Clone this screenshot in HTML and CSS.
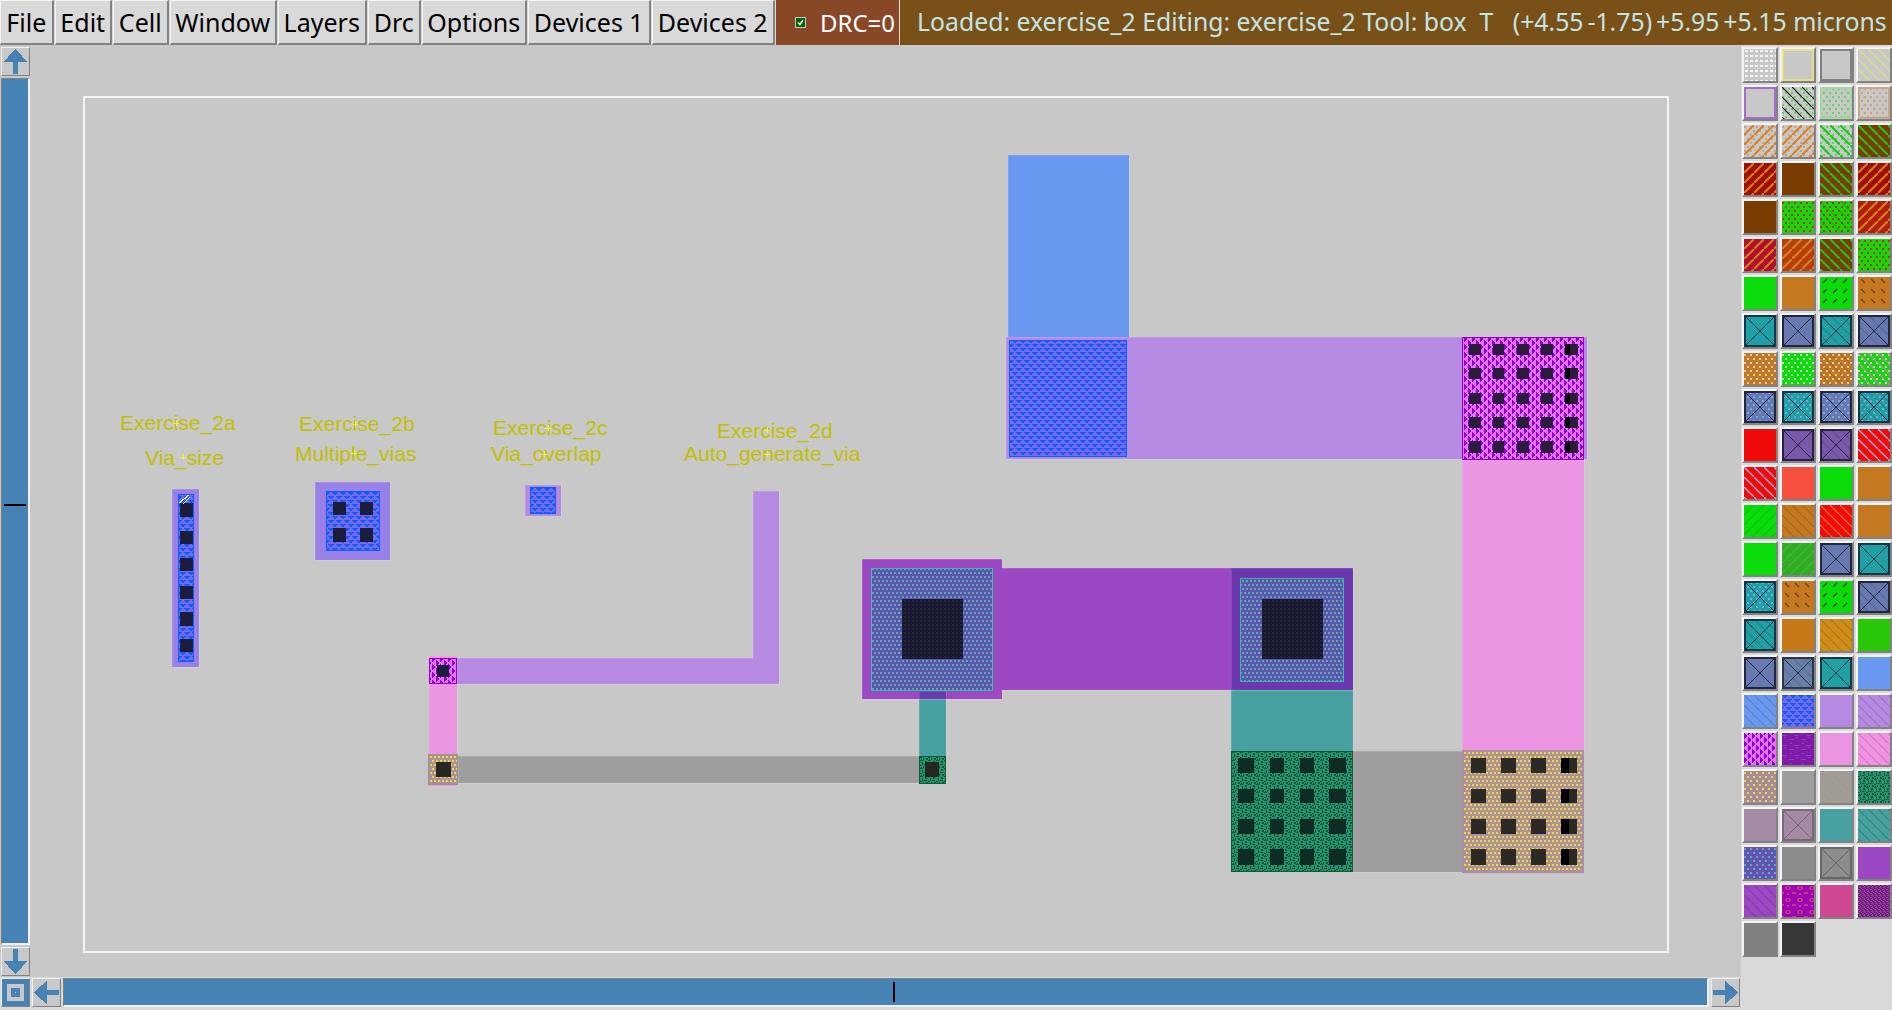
FILE: index.html
```html
<!DOCTYPE html>
<html lang="en">
<head>
<meta charset="utf-8">
<title>XSchem layout</title>
<link rel="stylesheet" href="styles.css">
</head>
<body>
<svg class="defs" aria-hidden="true">
<defs>
<pattern id="fish" width="8" height="8" patternUnits="userSpaceOnUse"><rect width="8" height="8" fill="#7a68e8"/><path fill="#0860ff" d="M0 0h6v1H0zM1 1h4v1H1zM2 2h2v1H2zM4 4h4v1H4zM0 4h2v1H0zM5 5h3v1H5zM0 5h1v1H0zM6 6h2v1H6z"/></pattern>
<pattern id="mag" width="8" height="8" patternUnits="userSpaceOnUse"><rect width="8" height="8" fill="#e274f0"/><path fill="#9000d0" d="M0 0h1v6H0zM1 1h1v4H1zM2 2h1v2H2zM4 4h1v4H4zM4 0h1v2H4zM5 5h1v3H5zM5 0h1v1H5zM6 6h1v2H6z"/></pattern>
<pattern id="tang" width="8" height="8" patternUnits="userSpaceOnUse"><rect width="8" height="8" fill="#2c9070"/><path fill="#0c5c34" d="M0 0h3v1H0zM5 1h2v2H5zM2 2h1v3H2zM0 5h2v1H0zM4 4h3v1H4zM6 6h2v2H6zM3 6h1v2H3zM1 7h1v1H1z"/></pattern>
<pattern id="ring" width="12" height="12" patternUnits="userSpaceOnUse"><rect width="12" height="12" fill="#9c08b0"/><path fill="#d03090" d="M4 1h4v1H4zM3 2h2v2H3zM7 2h2v2H7zM4 4h4v1H4zM0 7h2v2H0zM10 7h2v2H10zM5 8h2v2H5z"/></pattern>
<pattern id="dense" width="4" height="4" patternUnits="userSpaceOnUse"><rect width="4" height="4" fill="#6c1c98"/><path fill="#a04878" d="M0 0h2v1H0zM2 1h1v1H2zM1 2h2v1H1zM3 3h1v1H3z"/></pattern>
<pattern id="stripe" width="12" height="10" patternUnits="userSpaceOnUse"><rect width="12" height="10" fill="#8418a8"/><path fill="#6c4cc0" d="M0 2h5v1H0zM7 6h5v1H7zM2 4h2v1H2zM8 0h2v1H8z"/></pattern>
<pattern id="dp" width="4" height="8" patternUnits="userSpaceOnUse"><rect width="4" height="8" fill="#6a4eb4"/><path fill="#36bca0" d="M0 0h2v2H0zM2 4h2v2H2z"/></pattern>
<pattern id="dy" width="4" height="8" patternUnits="userSpaceOnUse"><rect width="4" height="8" fill="#ab8fa8"/><path fill="#f0e010" d="M0 0h2v2H0zM2 4h2v2H2z"/></pattern>
<pattern id="spk" width="4" height="4" patternUnits="userSpaceOnUse"><path fill="#fff" fill-opacity=".06" d="M0 0h2v2H0z"/></pattern>

<pattern id="d-w" width="5" height="5" patternUnits="userSpaceOnUse"><path fill="#f4f4f4" d="M1 1h3v2H1z"/></pattern>
<pattern id="d-g" width="6" height="8" patternUnits="userSpaceOnUse"><path fill="#58dc58" d="M0 1h2v2H0zM3 5h2v2H3z"/></pattern>
<pattern id="d-t" width="6" height="8" patternUnits="userSpaceOnUse"><path fill="#cca47c" d="M0 1h2v2H0zM3 5h2v2H3z"/></pattern>
<pattern id="d-r" width="6" height="8" patternUnits="userSpaceOnUse"><path fill="#f01818" d="M0 1h2v2H0zM3 5h2v2H3z"/></pattern>
<pattern id="d-p" width="6" height="8" patternUnits="userSpaceOnUse"><path fill="#d0d0c8" d="M0 1h2v2H0zM3 5h2v2H3z"/></pattern>
<pattern id="d-b" width="6" height="8" patternUnits="userSpaceOnUse"><path fill="#70a8e8" d="M0 1h2v2H0zM3 5h2v2H3z"/></pattern>
<pattern id="d-y" width="6" height="8" patternUnits="userSpaceOnUse"><path fill="#f0e010" d="M0 1h2v2H0zM3 5h2v2H3z"/></pattern>
<pattern id="d-c" width="6" height="8" patternUnits="userSpaceOnUse"><path fill="#34c0a4" d="M0 1h2v2H0zM3 5h2v2H3z"/></pattern>

<pattern id="h-k" width="10" height="10" patternUnits="userSpaceOnUse"><path stroke="#101010" stroke-width="1.2" d="M-2 -2L12 12"/></pattern>
<pattern id="h-y" width="10" height="10" patternUnits="userSpaceOnUse"><path stroke="#e4e070" stroke-width="1.2" d="M-2 -2L12 12"/></pattern>
<pattern id="h-g" width="10" height="10" patternUnits="userSpaceOnUse"><path stroke="#18c818" stroke-width="2" d="M-2 -2L12 12"/></pattern>
<pattern id="h-w" width="10" height="10" patternUnits="userSpaceOnUse"><path stroke="#b8b8e0" stroke-width="1.3" d="M-2 -2L12 12"/></pattern>
<pattern id="h-o" width="10" height="10" patternUnits="userSpaceOnUse"><path stroke="#e88020" stroke-width="1.2" d="M-2 -2L12 12"/></pattern>
<pattern id="h-d" width="10" height="10" patternUnits="userSpaceOnUse"><path stroke="#000" stroke-opacity=".15" stroke-width="1.2" d="M-2 -2L12 12"/></pattern>
<pattern id="h-t" width="10" height="10" patternUnits="userSpaceOnUse"><path stroke="#b89468" stroke-width="1.2" d="M-2 -2L12 12"/></pattern>
<pattern id="h-p" width="10" height="10" patternUnits="userSpaceOnUse"><path stroke="#f068c0" stroke-width="1.2" d="M-2 -2L12 12"/></pattern>
<pattern id="h-c" width="10" height="10" patternUnits="userSpaceOnUse"><path stroke="#2c8868" stroke-width="1.2" d="M-2 -2L12 12"/></pattern>
<pattern id="f-o" width="10" height="10" patternUnits="userSpaceOnUse"><path stroke="#d88028" stroke-width="2" d="M12 -2L-2 12"/></pattern>
<pattern id="f-d" width="10" height="10" patternUnits="userSpaceOnUse"><path stroke="#000" stroke-opacity=".12" stroke-width="1.2" d="M12 -2L-2 12"/></pattern>
<pattern id="f-g" width="10" height="10" patternUnits="userSpaceOnUse"><path stroke="#20d020" stroke-width="1.2" d="M12 -2L-2 12"/></pattern>
<pattern id="s-f" width="10" height="10" patternUnits="userSpaceOnUse"><path stroke="#403818" stroke-width="1.2" d="M7 2L3 6"/></pattern>
<pattern id="s-b" width="10" height="10" patternUnits="userSpaceOnUse"><path stroke="#704010" stroke-width="1.2" d="M3 2L7 6"/></pattern>
<path id="box" d="M1 1H31V31H1z" fill="none" stroke-width="2"/>
<path id="x" d="M1 1H31V31H1zM1 1L31 31M31 1L1 31" fill="none" stroke-width="1.2"/>
</defs>
</svg>

<header class="topbar">
  <nav class="menus">
    <div class="menu">File</div>
    <div class="menu">Edit</div>
    <div class="menu">Cell</div>
    <div class="menu">Window</div>
    <div class="menu">Layers</div>
    <div class="menu">Drc</div>
    <div class="menu">Options</div>
    <div class="menu">Devices 1</div>
    <div class="menu">Devices 2</div>
  </nav>
  <div class="drc"><span class="check"><svg viewBox="0 0 11 11"><path d="M2.5 5.5L4.8 8L8.5 2.8" fill="none" stroke="#fff" stroke-width="1.8"/></svg></span>DRC=0</div>
  <div class="status">Loaded: exercise_2 Editing: exercise_2 Tool: box  T   <span class="coords">(+4.55 -1.75) +5.95 +5.15</span> microns</div>
</header>

<div class="work">
  <div class="editor">
    <div class="editor-main">
      <div class="vscroll">
        <div class="sbtn"><svg viewBox="0 0 28 28"><path class="arrow" d="M14 1L27 15H17V27H11V15H1z"/></svg></div>
        <div class="vbar"><span class="vtick"></span></div>
        <div class="sbtn"><svg viewBox="0 0 28 28"><path class="arrow" d="M14 27L1 13H11V1H17V13H27z"/></svg></div>
      </div>
      <div class="canvas">
        <svg class="layout" viewBox="30 45 1711 932">
          <rect class="frame" x="84" y="97" width="1584" height="855"/>

          <g class="edge">
            <rect fill="#9880e8" x="172" y="489" width="27" height="178"/>
            <rect fill="#9880e8" x="315" y="482" width="75" height="78"/>
            <rect fill="#b48ae0" x="525" y="485" width="36" height="31"/>
          </g>
          <rect fill="url(#fish)" stroke="#0860ff" x="178.5" y="494.5" width="15" height="167"/>
          <rect fill="url(#fish)" stroke="#0860ff" x="326.5" y="491.5" width="53" height="59"/>
          <rect fill="url(#fish)" stroke="#0860ff" x="530.5" y="487.5" width="25" height="26"/>
          <path class="contact" d="M180 503h13v14h-13zM180 531h13v13h-13zM180 558h13v13h-13zM180 586h13v13h-13zM180 612h13v14h-13zM180 639h13v13h-13zM333 502h13v13h-13zM360 502h13v13h-13zM333 528h13v14h-13zM360 528h13v14h-13z"/>
          <path d="M179 503L189 495M183 504L190 497" stroke="#e8f0ff" stroke-width="1.2" fill="none"/>

          <g class="edge">
            <path fill="#ea94e2" d="M429 656h28v130h-28z"/>
            <path fill="#b68ae2" d="M753 491h26v193H457v-26h296z"/>
            <rect fill="#9e9e9e" x="458" y="756" width="461" height="27"/>
            <rect fill="#48a0a0" x="919" y="690" width="27" height="66"/>
          </g>
          <rect fill="url(#mag)" stroke="#9000d0" x="429.5" y="658.5" width="27" height="25"/>
          <rect fill="#a09098" x="428" y="754" width="30" height="31"/>
          <rect fill="url(#dy)" x="430" y="756" width="27" height="27"/>
          <rect fill="url(#tang)" stroke="#0c5c34" x="919.5" y="756.5" width="26" height="27"/>
          <path class="contact" d="M437 665h12v12h-12z"/>
          <path class="contact-dk" d="M436 762h15v15h-15zM925 762h14v15h-14z"/>

          <g class="edge">
            <rect fill="#6898f0" x="1008" y="155" width="121" height="182"/>
            <rect fill="#b68ae2" x="1006" y="337" width="581" height="122"/>
            <rect fill="#ea94e2" x="1462" y="460" width="122" height="291"/>
            <rect fill="#48a0a0" x="1231" y="690" width="122" height="61"/>
            <rect fill="#9e9e9e" x="1353" y="751" width="110" height="121"/>
            <path fill="#9c48c4" d="M862 559h140v9h231v122H1002v9H862z"/>
            <rect fill="#6c38b0" x="1231" y="568" width="122" height="122"/>
            <rect fill="#6c38b0" x="919" y="691" width="27" height="8"/>
          </g>
          <rect fill="url(#fish)" stroke="#0860ff" x="1009.5" y="340.5" width="117" height="116"/>
          <rect fill="url(#mag)" stroke="#9000d0" x="1462.5" y="337.5" width="121" height="122"/>
          <rect fill="url(#dp)" stroke="#36bca0" x="871.5" y="568.5" width="121" height="122"/>
          <rect fill="url(#dp)" stroke="#36bca0" x="1240.5" y="578.5" width="103" height="103"/>
          <rect fill="url(#tang)" stroke="#0c5c34" x="1231.5" y="751.5" width="121" height="120"/>
          <rect fill="#ab8fa8" x="1462" y="750" width="122" height="123"/>
          <rect fill="url(#dy)" x="1464" y="752" width="118" height="119"/>
          <path class="contact-big" d="M902 599h61v60h-61zM1262 599h61v60h-61z"/>
          <rect fill="url(#spk)" x="902" y="599" width="61" height="60"/>
          <rect fill="url(#spk)" x="1262" y="599" width="61" height="60"/>
          <path class="contact-mag" d="M1469 344h12v11h-12zM1493 344h11v11h-11zM1517 344h12v11h-12zM1541 344h12v11h-12zM1565 344h13v11h-13zM1469 368h12v11h-12zM1493 368h11v11h-11zM1517 368h12v11h-12zM1541 368h12v11h-12zM1565 368h13v11h-13zM1469 393h12v11h-12zM1493 393h11v11h-11zM1517 393h12v11h-12zM1541 393h12v11h-12zM1565 393h13v11h-13zM1469 417h12v11h-12zM1493 417h11v11h-11zM1517 417h12v11h-12zM1541 417h12v11h-12zM1565 417h13v11h-13zM1469 441h12v12h-12zM1493 441h11v12h-11zM1517 441h12v12h-12zM1541 441h12v12h-12zM1565 441h13v12h-13z"/>
          <path fill="#080408" d="M1565 344h5v11h-5zM1565 368h5v11h-5zM1565 393h5v11h-5zM1565 417h5v11h-5zM1565 441h5v12h-5z"/>
          <path class="contact-grn" d="M1238 758h16v15h-16zM1270 758h14v15h-14zM1300 758h14v15h-14zM1329 758h17v15h-17zM1238 789h16v14h-16zM1270 789h14v14h-14zM1300 789h14v14h-14zM1329 789h17v14h-17zM1238 819h16v15h-16zM1270 819h14v15h-14zM1300 819h14v15h-14zM1329 819h17v15h-17zM1238 849h16v16h-16zM1270 849h14v16h-14zM1300 849h14v16h-14zM1329 849h17v16h-17z"/>
          <path class="contact-tan" d="M1471 758h15v15h-15zM1501 758h15v15h-15zM1531 758h15v15h-15zM1561 758h16v15h-16zM1471 789h15v14h-15zM1501 789h15v14h-15zM1531 789h15v14h-15zM1561 789h16v14h-16zM1471 819h15v15h-15zM1501 819h15v15h-15zM1531 819h15v15h-15zM1561 819h16v15h-16zM1471 849h15v16h-15zM1501 849h15v16h-15zM1531 849h15v16h-15zM1561 849h16v16h-16z"/>
          <path fill="#000" d="M1561 758h8v15h-8zM1561 789h8v14h-8zM1561 819h8v15h-8zM1561 849h8v16h-8z"/>

          <text class="lbl" x="120" y="430">Exercise_2a</text>
          <text class="lbl" x="145" y="465">Via_size</text>
          <text class="lbl" x="299" y="431">Exercise_2b</text>
          <text class="lbl" x="295" y="461">Multiple_vias</text>
          <text class="lbl" x="493" y="435">Exercise_2c</text>
          <text class="lbl" x="491" y="461">Via_overlap</text>
          <text class="lbl" x="717" y="438">Exercise_2d</text>
          <text class="lbl" x="684" y="461">Auto_generate_via</text>
          <path class="mark" d="M173 423h6M176 420v6M180 457h6M183 454v6M352 424h6M355 421v6M351 453h6M354 450v6M545 428h6M548 425v6M541 454h6M544 451v6M764 430h6M767 427v6M764 454h6M767 451v6"/>
        </svg>
      </div>
    </div>
    <div class="hscroll">
      <div class="sbtn sbtn-solid"><svg viewBox="0 0 28 28"><path class="ring" fill-rule="evenodd" d="M5 5h18v18H5zM9 9v10h10V9z"/><path class="ring" d="M13 13h2v2h-2z"/></svg></div>
      <div class="sbtn"><svg viewBox="0 0 28 28"><path class="arrow" d="M1 14L15 1V11H27V17H15V27z"/></svg></div>
      <div class="hbar"><span class="htick"></span></div>
      <div class="sbtn"><svg viewBox="0 0 28 28"><path class="arrow" d="M27 14L13 1V11H1V17H13V27z"/></svg></div>
    </div>
  </div>

  <aside class="palette">
    <div class="cell"><svg class="sw"><rect class="c-base"/><rect fill="url(#d-w)"/></svg></div>
    <div class="cell"><svg class="sw"><rect class="c-base"/><use href="#box" stroke="#e4e084"/></svg></div>
    <div class="cell"><svg class="sw"><rect class="c-base"/><use href="#box" stroke="#808080"/></svg></div>
    <div class="cell"><svg class="sw"><rect class="c-base"/><rect fill="url(#h-y)"/></svg></div>

    <div class="cell"><svg class="sw"><rect class="c-base"/><use href="#box" stroke="#a070c8"/></svg></div>
    <div class="cell"><svg class="sw"><rect class="c-base"/><rect fill="url(#d-g)"/><rect fill="url(#h-k)"/></svg></div>
    <div class="cell"><svg class="sw"><rect class="c-base"/><rect fill="url(#d-g)"/><use href="#box" stroke="#a0d8a0"/></svg></div>
    <div class="cell"><svg class="sw"><rect class="c-base"/><rect fill="url(#d-t)"/><use href="#box" stroke="#c8a888"/></svg></div>

    <div class="cell"><svg class="sw"><rect class="c-base"/><rect fill="url(#d-t)"/><rect fill="url(#f-o)"/></svg></div>
    <div class="cell"><svg class="sw"><rect class="c-base"/><rect fill="url(#d-t)"/><rect fill="url(#f-o)"/></svg></div>
    <div class="cell"><svg class="sw"><rect class="c-base"/><rect fill="url(#d-g)"/><rect fill="url(#h-g)"/></svg></div>
    <div class="cell"><svg class="sw"><rect class="c-brown"/><rect fill="url(#h-g)"/></svg></div>

    <div class="cell"><svg class="sw"><rect class="c-dred"/><rect fill="url(#f-o)"/></svg></div>
    <div class="cell"><svg class="sw"><rect class="c-brown"/></svg></div>
    <div class="cell"><svg class="sw"><rect class="c-brown"/><rect fill="url(#h-g)"/></svg></div>
    <div class="cell"><svg class="sw"><rect class="c-dred"/><rect fill="url(#f-o)"/></svg></div>

    <div class="cell"><svg class="sw"><rect class="c-brown"/></svg></div>
    <div class="cell"><svg class="sw"><rect class="c-green"/><rect fill="url(#d-r)"/></svg></div>
    <div class="cell"><svg class="sw"><rect class="c-green"/><rect fill="url(#d-r)"/><rect fill="url(#h-d)"/></svg></div>
    <div class="cell"><svg class="sw"><rect class="c-rust"/><rect fill="url(#f-o)"/></svg></div>

    <div class="cell"><svg class="sw"><rect class="c-crim"/><rect fill="url(#f-o)"/></svg></div>
    <div class="cell"><svg class="sw"><rect class="c-burnt"/><rect fill="url(#f-o)"/></svg></div>
    <div class="cell"><svg class="sw"><rect class="c-brown"/><rect fill="url(#h-g)"/></svg></div>
    <div class="cell"><svg class="sw"><rect class="c-green"/><rect fill="url(#d-r)"/></svg></div>

    <div class="cell"><svg class="sw"><rect class="c-green"/></svg></div>
    <div class="cell"><svg class="sw"><rect class="c-orange"/></svg></div>
    <div class="cell"><svg class="sw"><rect class="c-green"/><rect fill="url(#s-f)"/></svg></div>
    <div class="cell"><svg class="sw"><rect class="c-orange"/><rect fill="url(#s-b)"/></svg></div>

    <div class="cell"><svg class="sw"><rect class="c-teal"/><use href="#x" stroke="#123848"/></svg></div>
    <div class="cell"><svg class="sw"><rect class="c-slate"/><use href="#x" stroke="#202840"/></svg></div>
    <div class="cell"><svg class="sw"><rect class="c-teal"/><rect fill="url(#h-d)"/><use href="#x" stroke="#123848"/></svg></div>
    <div class="cell"><svg class="sw"><rect class="c-slate"/><rect fill="url(#h-d)"/><use href="#x" stroke="#202840"/></svg></div>

    <div class="cell"><svg class="sw"><rect class="c-orange"/><rect fill="url(#d-p)"/></svg></div>
    <div class="cell"><svg class="sw"><rect class="c-green"/><rect fill="url(#d-p)"/></svg></div>
    <div class="cell"><svg class="sw"><rect class="c-orange"/><rect fill="url(#d-p)"/><rect fill="url(#h-d)"/></svg></div>
    <div class="cell"><svg class="sw"><rect class="c-green"/><rect fill="url(#d-p)"/><rect fill="url(#h-p)"/></svg></div>

    <div class="cell"><svg class="sw"><rect class="c-slate"/><rect fill="url(#d-b)"/><use href="#x" stroke="#202840"/></svg></div>
    <div class="cell"><svg class="sw"><rect class="c-teal"/><rect fill="url(#d-b)"/><use href="#x" stroke="#123848"/></svg></div>
    <div class="cell"><svg class="sw"><rect class="c-slate"/><rect fill="url(#d-b)"/><use href="#x" stroke="#202840"/></svg></div>
    <div class="cell"><svg class="sw"><rect class="c-teal"/><rect fill="url(#d-b)"/><rect fill="url(#h-d)"/><use href="#x" stroke="#123848"/></svg></div>

    <div class="cell"><svg class="sw"><rect class="c-red"/></svg></div>
    <div class="cell"><svg class="sw"><rect class="c-vio"/><use href="#x" stroke="#2c2048"/></svg></div>
    <div class="cell"><svg class="sw"><rect class="c-vio"/><rect fill="url(#h-d)"/><use href="#x" stroke="#2c2048"/></svg></div>
    <div class="cell"><svg class="sw"><rect class="c-red"/><rect fill="url(#h-w)"/></svg></div>

    <div class="cell"><svg class="sw"><rect class="c-red"/><rect fill="url(#h-w)"/></svg></div>
    <div class="cell"><svg class="sw"><rect class="c-coral"/></svg></div>
    <div class="cell"><svg class="sw"><rect class="c-green"/></svg></div>
    <div class="cell"><svg class="sw"><rect class="c-orange"/></svg></div>

    <div class="cell"><svg class="sw"><rect class="c-green"/><rect fill="url(#f-d)"/></svg></div>
    <div class="cell"><svg class="sw"><rect class="c-orange"/><rect fill="url(#h-d)"/></svg></div>
    <div class="cell"><svg class="sw"><rect class="c-red"/><rect fill="url(#h-o)"/></svg></div>
    <div class="cell"><svg class="sw"><rect class="c-orange"/></svg></div>

    <div class="cell"><svg class="sw"><rect class="c-green"/></svg></div>
    <div class="cell"><svg class="sw"><rect class="c-leaf"/><rect fill="url(#f-g)"/></svg></div>
    <div class="cell"><svg class="sw"><rect class="c-slate"/><use href="#x" stroke="#202840"/></svg></div>
    <div class="cell"><svg class="sw"><rect class="c-teal"/><use href="#x" stroke="#123848"/></svg></div>

    <div class="cell"><svg class="sw"><rect class="c-teal"/><rect fill="url(#d-b)"/><use href="#x" stroke="#123848"/></svg></div>
    <div class="cell"><svg class="sw"><rect class="c-orange"/><rect fill="url(#s-b)"/></svg></div>
    <div class="cell"><svg class="sw"><rect class="c-green"/><rect fill="url(#s-f)"/></svg></div>
    <div class="cell"><svg class="sw"><rect class="c-slate"/><rect fill="url(#h-d)"/><use href="#x" stroke="#202840"/></svg></div>

    <div class="cell"><svg class="sw"><rect class="c-teal"/><rect fill="url(#h-d)"/><use href="#x" stroke="#123848"/></svg></div>
    <div class="cell"><svg class="sw"><rect class="c-dorange"/></svg></div>
    <div class="cell"><svg class="sw"><rect class="c-amber"/><rect fill="url(#h-d)"/></svg></div>
    <div class="cell"><svg class="sw"><rect class="c-lime"/></svg></div>

    <div class="cell"><svg class="sw"><rect class="c-slate"/><use href="#x" stroke="#202840"/></svg></div>
    <div class="cell"><svg class="sw"><rect class="c-steel"/><rect fill="url(#h-d)"/><use href="#x" stroke="#283848"/></svg></div>
    <div class="cell"><svg class="sw"><rect class="c-teal"/><use href="#x" stroke="#123848"/></svg></div>
    <div class="cell"><svg class="sw"><rect class="c-blue"/></svg></div>

    <div class="cell"><svg class="sw"><rect class="c-blue"/><rect fill="url(#h-d)"/></svg></div>
    <div class="cell"><svg class="sw"><rect fill="url(#fish)"/></svg></div>
    <div class="cell"><svg class="sw"><rect class="c-lilac"/></svg></div>
    <div class="cell"><svg class="sw"><rect class="c-lilac"/><rect fill="url(#h-d)"/></svg></div>

    <div class="cell"><svg class="sw"><rect fill="url(#mag)"/></svg></div>
    <div class="cell"><svg class="sw"><rect fill="url(#stripe)"/></svg></div>
    <div class="cell"><svg class="sw"><rect class="c-pink"/></svg></div>
    <div class="cell"><svg class="sw"><rect class="c-pink"/><rect fill="url(#h-p)"/></svg></div>

    <div class="cell"><svg class="sw"><rect class="c-mauve"/><rect fill="url(#d-y)"/></svg></div>
    <div class="cell"><svg class="sw"><rect class="c-gray"/></svg></div>
    <div class="cell"><svg class="sw"><rect class="c-gray"/><rect fill="url(#h-t)"/></svg></div>
    <div class="cell"><svg class="sw"><rect fill="url(#tang)"/></svg></div>

    <div class="cell"><svg class="sw"><rect class="c-mauve"/></svg></div>
    <div class="cell"><svg class="sw"><rect class="c-mauve"/><use href="#x" stroke="#786878"/></svg></div>
    <div class="cell"><svg class="sw"><rect class="c-sea"/></svg></div>
    <div class="cell"><svg class="sw"><rect class="c-sea"/><rect fill="url(#h-c)"/></svg></div>

    <div class="cell"><svg class="sw"><rect class="c-indigo"/><rect fill="url(#d-c)"/></svg></div>
    <div class="cell"><svg class="sw"><rect class="c-dgray"/></svg></div>
    <div class="cell"><svg class="sw"><rect class="c-dgray"/><use href="#x" stroke="#686868"/></svg></div>
    <div class="cell"><svg class="sw"><rect class="c-purple"/></svg></div>

    <div class="cell"><svg class="sw"><rect class="c-purple"/><rect fill="url(#h-d)"/></svg></div>
    <div class="cell"><svg class="sw"><rect fill="url(#ring)"/></svg></div>
    <div class="cell"><svg class="sw"><rect class="c-rose"/></svg></div>
    <div class="cell"><svg class="sw"><rect fill="url(#dense)"/></svg></div>

    <div class="cell"><svg class="sw"><rect class="c-lgray"/></svg></div>
    <div class="cell"><svg class="sw"><rect class="c-char"/></svg></div>
  </aside>
</div>
</body>
</html>
```

FILE: styles.css
```css
* { box-sizing: border-box; }

html, body {
  margin: 0;
  height: 100%;
  overflow: hidden;
}

body {
  width: 1892px;
  height: 1010px;
  background: #d9d9d9;
  font-family: "Noto Sans", sans-serif;
  display: flex;
  flex-direction: column;
}

.defs {
  display: block;
  width: 0;
  height: 0;
  flex: none;
}

/* top bar */
.topbar {
  display: flex;
  height: 45px;
  flex: none;
  background: #785018;
  font-size: 25px;
  line-height: 42px;
}

.menus {
  display: grid;
  grid-template-columns: 55px 58px 57px 108px 90px 54px 106px 124px 124px;
  flex: none;
  background: #d9d9d9;
}

.menu {
  color: #000;
  margin-right: 1.5px;
  text-align: center;
  border: 1px solid;
  border-width: 1px 2px 2px 1px;
  border-color: #f4f4f4 #828282 #828282 #f4f4f4;
  white-space: nowrap;
}

.drc {
  background: #884828;
  color: #fff;
  width: 124px;
  flex: none;
  display: flex;
  align-items: center;
  padding-left: 19px;
  gap: 14px;
  font-size: 24px;
  border-right: 1px solid #d9d9d9;
}

.check {
  width: 11px;
  height: 11px;
  background: #006400;
  border: 1px solid #c8c8c8;
  display: block;
  flex: none;
}

.check svg { display: block; width: 9px; height: 9px; }

.status {
  flex: 1;
  padding-left: 17px;
  font-size: 24.8px;
  color: #c4e4e4;
  white-space: pre;
}

.coords { word-spacing: -2.5px; }

/* body */
.work {
  display: flex;
  flex: 1;
  min-height: 0;
}

.editor {
  width: 1741px;
  display: flex;
  flex-direction: column;
}

.editor-main {
  flex: 1;
  min-height: 0;
  display: flex;
  background: #c8c8c8;
}

.vscroll {
  width: 30px;
  flex: none;
  padding: 2px 0 1px 1px;
  display: flex;
  flex-direction: column;
  gap: 2px;
}

.canvas { flex: 1; min-width: 0; }

.layout {
  display: block;
  width: 1711px;
  height: 932px;
  shape-rendering: crispEdges;
}

.sbtn {
  width: 29px;
  height: 29px;
  flex: none;
  background: #c8c8c8;
  border: 1px solid;
  border-color: #f0f0f0 #808080 #808080 #f0f0f0;
}

.sbtn svg {
  display: block;
  width: 27px;
  height: 27px;
  shape-rendering: crispEdges;
}

.sbtn-solid { background: #4682b4; }

.arrow { fill: #4682b4; }
.ring { fill: #c8c8c8; }

.vbar {
  flex: 1;
  width: 29px;
  background: #4682b4;
  border: 1px solid;
  border-width: 1px 2px 2px 1px;
  border-color: #808080 #f0f0f0 #f0f0f0 #808080;
  display: flex;
  align-items: center;
  justify-content: center;
  padding-bottom: 12px;
}

.vtick { display: block; width: 22px; height: 2px; background: #000; }

.hscroll {
  flex: none;
  height: 33px;
  padding: 1px 1px 3px 1px;
  display: flex;
  gap: 2px;
}

.hbar {
  flex: 1;
  background: #4682b4;
  border: 1px solid;
  border-width: 1px 2px 2px 1px;
  border-color: #808080 #f0f0f0 #f0f0f0 #808080;
  display: flex;
  align-items: center;
  justify-content: center;
  padding-left: 16px;
}

.htick { display: block; width: 2px; height: 20px; background: #000; }

/* layout canvas */
.frame { fill: none; stroke: #f4f4f4; stroke-width: 2; }
.edge > * { stroke: #ffffff; stroke-opacity: .12; stroke-width: 1; }
.contact { fill: #1c1c3c; }
.contact-dk { fill: #242820; }
.contact-big { fill: #181830; }
.contact-mag { fill: #2c1c3c; }
.contact-grn { fill: #0c2c24; }
.contact-tan { fill: #2c2824; }
.mark { stroke: #f0f040; stroke-width: 1; fill: none; }

.lbl {
  font-family: "Liberation Sans", Arial, sans-serif;
  font-size: 21px;
  fill: #c0c000;
  shape-rendering: auto;
}

/* palette */
.palette {
  flex: 1;
  min-width: 0;
  padding: 2px 0 0 1px;
  display: grid;
  grid-template-columns: repeat(4, 36px);
  grid-auto-rows: 36px;
  gap: 2px;
  align-content: start;
}

.cell {
  border: 2px solid;
  border-color: #f4f4f4 #828282 #828282 #f4f4f4;
  background: #c8c8c8;
}

.sw {
  display: block;
  width: 32px;
  height: 32px;
  shape-rendering: crispEdges;
}

.sw rect { width: 32px; height: 32px; }

.c-base { fill: #c8c8c8; }
.c-brown { fill: #7a3c00; }
.c-dred { fill: #a01000; }
.c-rust { fill: #b02008; }
.c-crim { fill: #b01028; }
.c-burnt { fill: #b84008; }
.c-green { fill: #0adc0a; }
.c-orange { fill: #c47820; }
.c-dorange { fill: #c47818; }
.c-amber { fill: #d08c18; }
.c-lime { fill: #28c808; }
.c-leaf { fill: #38a828; }
.c-teal { fill: #20a0a4; }
.c-slate { fill: #6878b0; }
.c-steel { fill: #6880a8; }
.c-red { fill: #f00a0a; }
.c-coral { fill: #f85040; }
.c-vio { fill: #7858a8; }
.c-blue { fill: #6898f0; }
.c-lilac { fill: #b68ae2; }
.c-pink { fill: #ea94e2; }
.c-mauve { fill: #a48aa4; }
.c-gray { fill: #9e9e9e; }
.c-sea { fill: #48a0a0; }
.c-indigo { fill: #6c50b8; }
.c-dgray { fill: #8c8c8c; }
.c-purple { fill: #9c48c4; }
.c-rose { fill: #d04890; }
.c-lgray { fill: #808080; }
.c-char { fill: #383838; }
```
